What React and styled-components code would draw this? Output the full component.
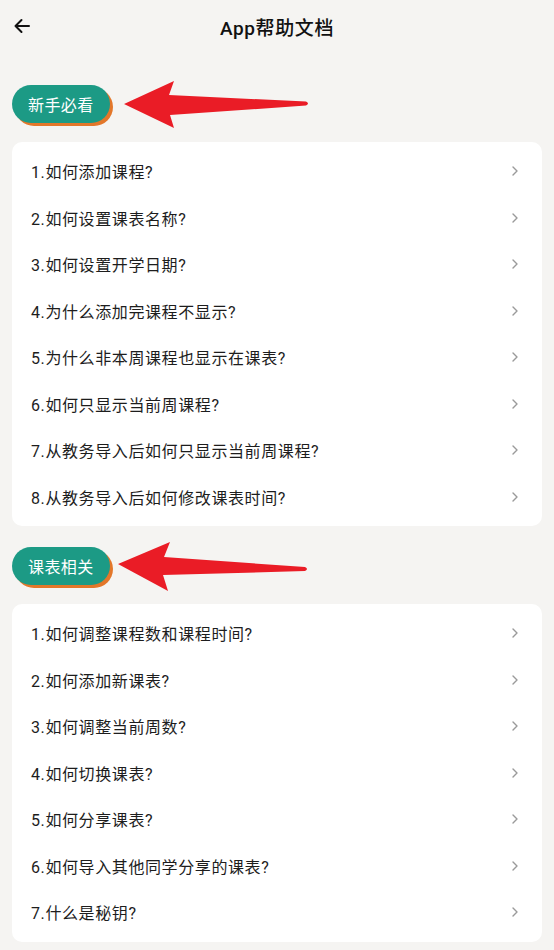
import React from "react";
import styled, { createGlobalStyle } from "styled-components";

const Global = createGlobalStyle`
  html, body { margin: 0; padding: 0; background: #f5f4f2; }
  body { font-family: Roboto, "Noto Sans CJK SC", "Noto Sans", sans-serif; -webkit-font-smoothing: antialiased; }
  * { box-sizing: border-box; }
`;

const Page = styled.div`
  width: 554px;
  min-height: 950px;
  background: #f5f4f2;
  display: flex;
  flex-direction: column;
`;

const Header = styled.header`
  height: 52px;
  display: flex;
  align-items: center;
  justify-content: center;
  position: relative;
`;

const Back = styled.button`
  position: absolute;
  left: 10px;
  top: 14px;
  width: 24px;
  height: 24px;
  border: 0;
  padding: 0;
  background: transparent;
  display: flex;
  align-items: center;
  justify-content: center;
`;

const Title = styled.h1`
  margin: 0;
  font-size: 19px;
  font-weight: 500;
  color: #111;
  letter-spacing: 0.6px;
`;

const Content = styled.main`
  padding: 33px 12px 0 12px;
  display: flex;
  flex-direction: column;
  gap: 21px;
`;

const Section = styled.section`
  display: flex;
  flex-direction: column;
  gap: 19px;
`;

const SectionHead = styled.div`
  position: relative;
  display: flex;
  align-items: center;
  height: 38px;
`;

const Pill = styled.div`
  height: 38px;
  padding: 0 16px;
  border-radius: 19px;
  background: #1c9a85;
  color: #fff;
  font-size: 16px;
  letter-spacing: 0.4px;
  display: flex;
  align-items: center;
  box-shadow: 3px 3px 0 #e3772a;
`;

const ArrowMark = styled.svg`
  position: absolute;
  left: ${(p) => p.$left}px;
  top: ${(p) => p.$top}px;
`;

const Card = styled.div`
  background: #fff;
  border-radius: 10px;
  padding: 6px 0;
  display: flex;
  flex-direction: column;
`;

const Row = styled.div`
  height: 46.5px;
  display: flex;
  align-items: center;
  justify-content: space-between;
  padding: 0 23px 0 19px;
  font-size: 16px;
  letter-spacing: 0.6px;
  color: #1d1d1d;
`;

const Chevron = () => (
  <svg width="8" height="10" viewBox="0 0 8 10">
    <path d="M2 1 L6 5 L2 9" fill="none" stroke="#9a9a9a" strokeWidth="1.4" strokeLinecap="round" strokeLinejoin="round" />
  </svg>
);

const RedArrow = ({ left, top, d, w, h }) => (
  <ArrowMark $left={left} $top={top} width={w} height={h} viewBox={`0 0 ${w} ${h}`}>
    <path d={d} fill="#ea1c26" />
  </ArrowMark>
);

const sections = [
  {
    title: "新手必看",
    arrow: {
      left: 108,
      top: -5,
      w: 194,
      h: 50,
      d: "M4 24 L54 1 L49 15 L186 21.5 Q190 23.5 186 25.5 L50 35 L54 48 Z",
    },
    items: [
      "1.如何添加课程?",
      "2.如何设置课表名称?",
      "3.如何设置开学日期?",
      "4.为什么添加完课程不显示?",
      "5.为什么非本周课程也显示在课表?",
      "6.如何只显示当前周课程?",
      "7.从教务导入后如何只显示当前周课程?",
      "8.从教务导入后如何修改课表时间?",
    ],
  },
  {
    title: "课表相关",
    arrow: {
      left: 104,
      top: -7,
      w: 200,
      h: 54,
      d: "M2 24 L54 2 L48 17 L189 27 Q193 29 189 31 L47 35 L52 51 Z",
    },
    items: [
      "1.如何调整课程数和课程时间?",
      "2.如何添加新课表?",
      "3.如何调整当前周数?",
      "4.如何切换课表?",
      "5.如何分享课表?",
      "6.如何导入其他同学分享的课表?",
      "7.什么是秘钥?",
    ],
  },
];

export default function App() {
  return (
    <Page>
      <Global />
      <Header>
        <Back aria-label="back">
          <svg width="18" height="16" viewBox="0 0 18 16">
            <path d="M16 8 H2.5 M8.5 2 L2.5 8 L8.5 14" fill="none" stroke="#111" strokeWidth="2" strokeLinecap="round" strokeLinejoin="round" />
          </svg>
        </Back>
        <Title>App帮助文档</Title>
      </Header>
      <Content>
        {sections.map((s) => (
          <Section key={s.title}>
            <SectionHead>
              <Pill>{s.title}</Pill>
              <RedArrow {...s.arrow} />
            </SectionHead>
            <Card>
              {s.items.map((it) => (
                <Row key={it}>
                  <span>{it}</span>
                  <Chevron />
                </Row>
              ))}
            </Card>
          </Section>
        ))}
      </Content>
    </Page>
  );
}
